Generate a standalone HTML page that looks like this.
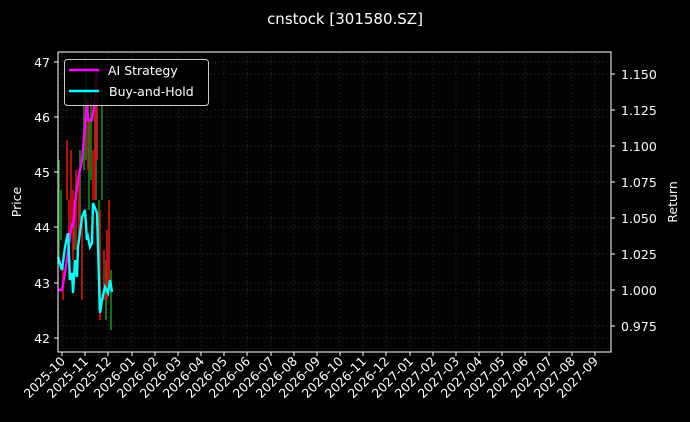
<!DOCTYPE html>
<html><head><meta charset="utf-8"><style>
html,body{margin:0;padding:0;background:#000;}
svg{display:block;}
text{font-family:"DejaVu Sans","Liberation Sans",sans-serif;fill:#fff;}
</style></head><body>
<svg width="690" height="422" viewBox="0 0 690 422" xmlns="http://www.w3.org/2000/svg">
<rect width="690" height="422" fill="#000"/>
<text x="345" y="24" font-size="15" text-anchor="middle">cnstock [301580.SZ]</text>
<rect x="58" y="52" width="553" height="300" fill="#030303"/>
<g stroke="#3a3a3a" stroke-width="0.5" stroke-dasharray="2,2">
<path d="M58 62H611M58 117H611M58 172H611M58 227H611M58 283H611M58 338H611"/>
<path d="M58 74H611M58 110H611M58 146H611M58 182H611M58 218H611M58 254H611M58 290H611M58 326H611"/>
<path d="M62 52V352M85 52V352M108 52V352M132 52V352M155 52V352M178 52V352M201 52V352M224 52V352M247 52V352M271 52V352M294 52V352M317 52V352M340 52V352M363 52V352M386 52V352M410 52V352M433 52V352M456 52V352M479 52V352M502 52V352M525 52V352M549 52V352M572 52V352M595 52V352"/>
</g>
<g stroke-width="1.6">
<path stroke="#1a8a1a" d="M59 160V260M61 190V240M74 200V250M80 150V220M84 90V170M86 60V160M89 120V210M91 90V180M96 100V200M99 200V310M102 90V200M106 260V320M111 270V330"/>
<path stroke="#e01010" d="M63 260V300M67 140V200M69 200V280M71 150V230M73 190V260M76 170V250M79 170V240M82 220V300M88 100V170M93 150V200M95 70V200M97 70V160M100 210V320M104 250V300M107 230V300M109 200V290"/>
</g>
<polyline fill="none" stroke="#ff00ff" stroke-width="2.4" points="58,290 62,290 65,273 70,237 72,223 73,227 75,203 78,180 82,160 85,127 87,100 88,120 92,120 95,100 97,72 104,70 110,70"/>
<polyline fill="none" stroke="#00ffff" stroke-width="2.4" points="58,257 62,270 65,247 68,233 70,280 72,273 73,293 75,260 77,277 78,247 82,217 85,210 87,240 88,237 90,247 92,243 93,203 97,213 98,247 100,313 102,300 105,287 108,293 110,280 112,292"/>
<rect x="58" y="52" width="553" height="300" fill="none" stroke="#fff" stroke-width="1"/>
<g stroke="#fff" stroke-width="1">
<path d="M54 62H58M54 117H58M54 172H58M54 227H58M54 283H58M54 338H58"/>
<path d="M611 74H615M611 110H615M611 146H615M611 182H615M611 218H615M611 254H615M611 290H615M611 326H615"/>
<path d="M62 352V356M85 352V356M108 352V356M132 352V356M155 352V356M178 352V356M201 352V356M224 352V356M247 352V356M271 352V356M294 352V356M317 352V356M340 352V356M363 352V356M386 352V356M410 352V356M433 352V356M456 352V356M479 352V356M502 352V356M525 352V356M549 352V356M572 352V356M595 352V356"/>
</g>
<g font-size="12.5" text-anchor="end">
<text x="50" y="67">47</text><text x="50" y="122">46</text><text x="50" y="177">45</text><text x="50" y="232">44</text><text x="50" y="288">43</text><text x="50" y="343">42</text>
</g>
<g font-size="12.5">
<text x="621" y="79">1.150</text><text x="621" y="115">1.125</text><text x="621" y="151">1.100</text><text x="621" y="187">1.075</text><text x="621" y="223">1.050</text><text x="621" y="259">1.025</text><text x="621" y="295">1.000</text><text x="621" y="331">0.975</text>
</g>
<text font-size="12.5" text-anchor="middle" transform="translate(21,202) rotate(-90)">Price</text>
<text font-size="12.5" text-anchor="middle" transform="translate(677,202) rotate(-90)">Return</text>
<g font-size="12.5" text-anchor="end">
<text transform="translate(66,362) rotate(-45)">2025-10</text>
<text transform="translate(89,362) rotate(-45)">2025-11</text>
<text transform="translate(112,362) rotate(-45)">2025-12</text>
<text transform="translate(136,362) rotate(-45)">2026-01</text>
<text transform="translate(159,362) rotate(-45)">2026-02</text>
<text transform="translate(182,362) rotate(-45)">2026-03</text>
<text transform="translate(205,362) rotate(-45)">2026-04</text>
<text transform="translate(228,362) rotate(-45)">2026-05</text>
<text transform="translate(251,362) rotate(-45)">2026-06</text>
<text transform="translate(275,362) rotate(-45)">2026-07</text>
<text transform="translate(298,362) rotate(-45)">2026-08</text>
<text transform="translate(321,362) rotate(-45)">2026-09</text>
<text transform="translate(344,362) rotate(-45)">2026-10</text>
<text transform="translate(367,362) rotate(-45)">2026-11</text>
<text transform="translate(390,362) rotate(-45)">2026-12</text>
<text transform="translate(414,362) rotate(-45)">2027-01</text>
<text transform="translate(437,362) rotate(-45)">2027-02</text>
<text transform="translate(460,362) rotate(-45)">2027-03</text>
<text transform="translate(483,362) rotate(-45)">2027-04</text>
<text transform="translate(506,362) rotate(-45)">2027-05</text>
<text transform="translate(529,362) rotate(-45)">2027-06</text>
<text transform="translate(553,362) rotate(-45)">2027-07</text>
<text transform="translate(576,362) rotate(-45)">2027-08</text>
<text transform="translate(599,362) rotate(-45)">2027-09</text>
</g>
<rect x="64.5" y="59.5" width="144" height="46" rx="3" fill="#000" fill-opacity="0.85" stroke="#ccc" stroke-width="1"/>
<path d="M69 70H99" stroke="#ff00ff" stroke-width="2.4"/>
<path d="M69 91H99" stroke="#00ffff" stroke-width="2.4"/>
<text x="108" y="75" font-size="12.5">AI Strategy</text>
<text x="109" y="96" font-size="12.5">Buy-and-Hold</text>
</svg>
</body></html>
